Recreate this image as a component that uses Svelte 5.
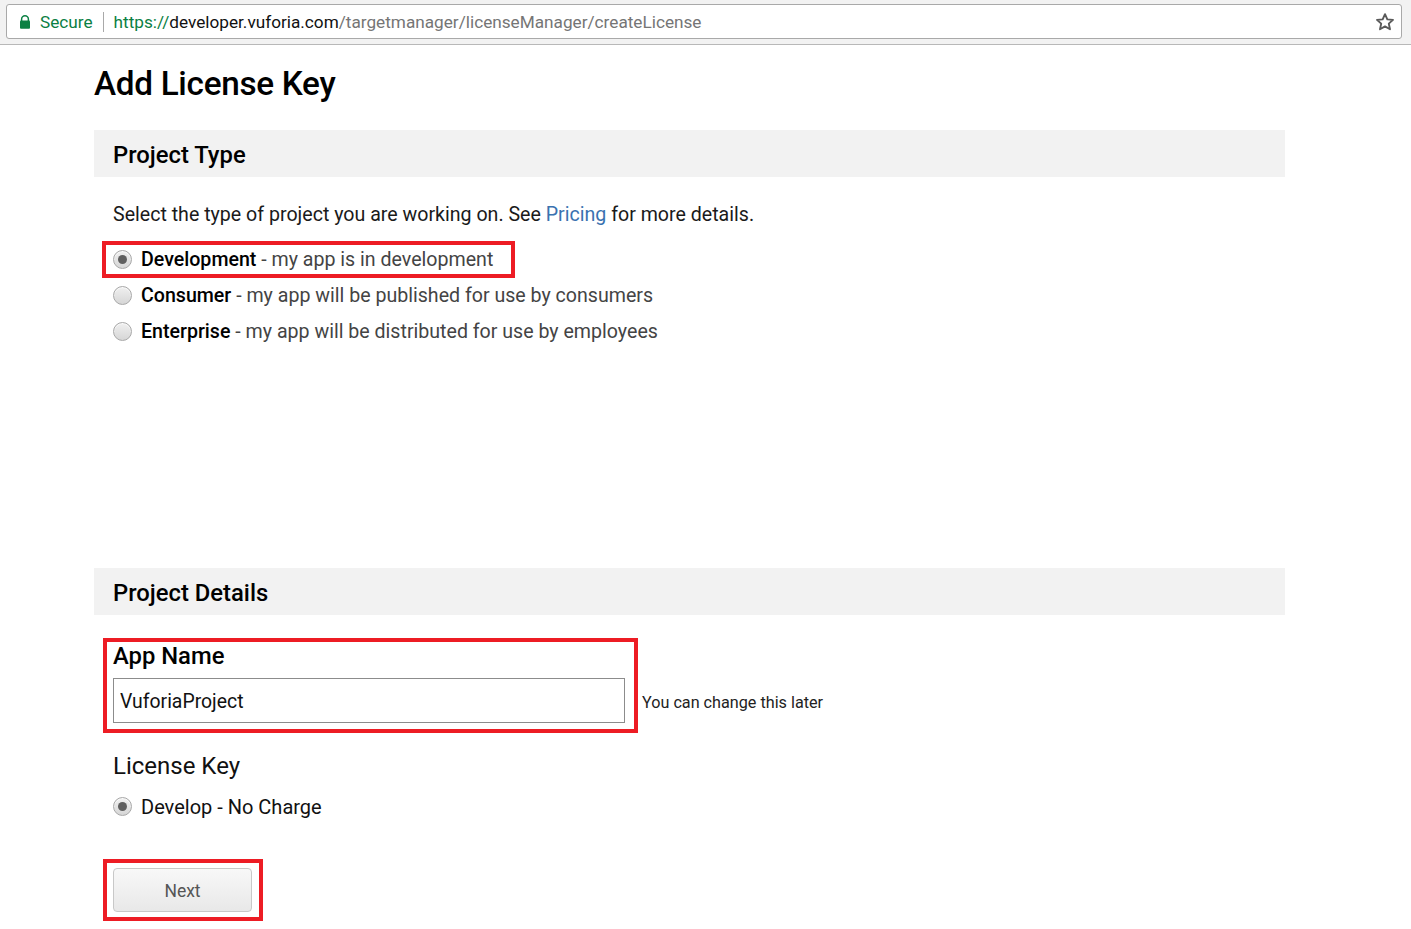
<script>
  const projectTypes = [
    { name: 'Development', desc: 'my app is in development', checked: true, marked: true },
    { name: 'Consumer', desc: 'my app will be published for use by consumers' },
    { name: 'Enterprise', desc: 'my app will be distributed for use by employees' },
  ];
</script>

<div class="toolbar">
  <div class="omnibox">
    <svg class="lock" width="12" height="14" viewBox="0 0 12 14">
      <path d="M2.6 6V4.2a3.4 3.4 0 0 1 6.8 0V6" fill="none" stroke="#0b8043" stroke-width="1.5" />
      <rect x="1" y="5.6" width="10" height="8.2" rx="1" fill="#0b8043" />
    </svg>
    <span class="secure">Secure</span>
    <span class="divider"></span>
    <span class="url"><span class="scheme">https://</span><span class="host">developer.vuforia.com</span><span class="path">/targetmanager/licenseManager/createLicense</span></span>
    <svg class="star" width="20" height="20" viewBox="0 0 18 18">
      <path d="M9 1.9l2.1 4.7 5.1.5-3.8 3.4 1.1 5L9 13l-4.5 2.5 1.1-5L1.8 7.1l5.1-.5z" fill="none" stroke="#5a5a5a" stroke-width="1.7" stroke-linejoin="round" />
    </svg>
  </div>
</div>

<main class="page">
  <h1>Add License Key</h1>

  <section class="project-type">
    <h2 class="section-title">Project Type</h2>
    <p class="intro">Select the type of project you are working on. See <a href="#pricing">Pricing</a> for more details.</p>
    <div class="options">
      {#each projectTypes as type}
        <label class="option" class:marked={type.marked}>
          <span class="radio" class:checked={type.checked}></span>
          <span><b>{type.name}</b><span class="desc">{` - ${type.desc}`}</span></span>
        </label>
      {/each}
    </div>
  </section>

  <section class="project-details">
    <h2 class="section-title">Project Details</h2>
    <div class="name-row">
      <div class="name-field">
        <div class="name-label">App Name</div>
        <input type="text" value="VuforiaProject" />
      </div>
      <span class="hint">You can change this later</span>
    </div>
    <div class="key-label">License Key</div>
    <label class="option plan">
      <span class="radio checked"></span>
      <span>Develop - No Charge</span>
    </label>
    <div class="next-wrap">
      <button type="button">Next</button>
    </div>
  </section>
</main>

<style>
  :global(body) {
    background: #fff;
    font-family: Roboto, "Liberation Sans", sans-serif;
    color: #000;
    overflow: hidden;
  }

  .toolbar {
    height: 40px;
    padding: 4px 9px 0 6px;
    background: #f2f2f2;
    border-bottom: 1px solid #b8b8b8;
  }

  .omnibox {
    height: 35px;
    box-sizing: border-box;
    background: #fff;
    border: 1px solid #a9a9a9;
    border-radius: 3px;
    display: flex;
    align-items: center;
    padding: 0 6px 0 12px;
    font-size: 17.2px;
  }

  .lock { flex: none; }

  .secure {
    margin-left: 9px;
    margin-right: -1px;
    color: #0b8043;
  }

  .divider {
    width: 1px;
    height: 20px;
    background: #a9a9a9;
    margin: 0 10px 0 11px;
  }

  .scheme { color: #0b8043; }
  .host { color: #111; }
  .path { color: #757575; }

  .star {
    margin-left: auto;
    flex: none;
  }

  .page {
    width: 1191px;
    margin-left: 94px;
  }

  h1 {
    margin: 0;
    padding-top: 18px;
    height: 42px;
    font-size: 33.3px;
    line-height: 42px;
    font-weight: 500;
    letter-spacing: -0.3px;
  }

  .section-title {
    margin: 0;
    height: 47px;
    padding-left: 19px;
    background: #f2f2f2;
    font-size: 23.8px;
    line-height: 50px;
    font-weight: 500;
  }

  .project-type {
    margin-top: 25px;
    height: 438px;
  }

  .intro {
    margin: 24px 0 0 19px;
    font-size: 19.6px;
    line-height: 28px;
    color: #1a1a1a;
  }

  a {
    color: #3a72b0;
    text-decoration: none;
  }

  .options {
    margin-top: 17px;
    display: flex;
    flex-direction: column;
    gap: 8px;
  }

  .option {
    position: relative;
    display: flex;
    align-items: center;
    height: 28px;
    padding-left: 19px;
    font-size: 19.6px;
    line-height: 28px;
    white-space: nowrap;
  }

  b { font-weight: 500; }
  .desc { color: #444; }

  /* red annotation drawn over the screenshot */
  .option.marked::after {
    content: "";
    position: absolute;
    left: 8px;
    top: -5px;
    width: 413px;
    height: 37px;
    box-sizing: border-box;
    border: 4px solid #ed1c24;
  }

  .radio {
    flex: none;
    width: 19px;
    height: 19px;
    margin-right: 9px;
    margin-top: -1px;
    box-sizing: border-box;
    border-radius: 50%;
    border: 1px solid #a8a8a8;
    background: linear-gradient(#f0f0f0, #d6d6d6);
    box-shadow: inset 0 1px 1px rgba(255, 255, 255, 0.8);
    display: flex;
    align-items: center;
    justify-content: center;
  }

  .radio.checked::before {
    content: "";
    width: 9px;
    height: 9px;
    border-radius: 50%;
    background: #5f5f5f;
  }

  .name-row {
    margin-top: 23px;
    display: flex;
    align-items: flex-end;
    padding-left: 9px;
  }

  .name-field {
    position: relative;
    width: 535px;
    height: 95px;
    box-sizing: border-box;
    border: 4px solid #ed1c24;
    padding: 0 9px 0 6px;
  }

  .name-label {
    height: 36px;
    font-size: 23.8px;
    line-height: 28px;
    font-weight: 500;
  }

  input {
    display: block;
    width: 512px;
    height: 45px;
    box-sizing: border-box;
    border: 1px solid #8c8c8c;
    padding: 2px 6px 0;
    font: 19.4px Roboto, "Liberation Sans", sans-serif;
    color: #111;
    outline: none;
  }

  .hint {
    margin-left: 4px;
    padding-bottom: 18px;
    font-size: 16.2px;
    line-height: 24px;
    color: #222;
  }

  .key-label {
    margin: 17px 0 0 19px;
    font-size: 24px;
    line-height: 32px;
    color: #111;
  }

  .plan {
    margin-top: 11px;
    font-size: 20px;
    color: #111;
  }

  .next-wrap {
    margin: 38px 0 0 9px;
    width: 160px;
    height: 62px;
    box-sizing: border-box;
    border: 4px solid #ed1c24;
    padding: 5px 6px;
  }

  button {
    display: block;
    width: 139px;
    height: 44px;
    box-sizing: border-box;
    border: 1px solid #c8c8c8;
    border-radius: 4px;
    padding: 2px 0 0;
    background: linear-gradient(#f8f8f8, #e8e8e8);
    font: 17.5px Roboto, "Liberation Sans", sans-serif;
    color: #555;
  }
</style>
